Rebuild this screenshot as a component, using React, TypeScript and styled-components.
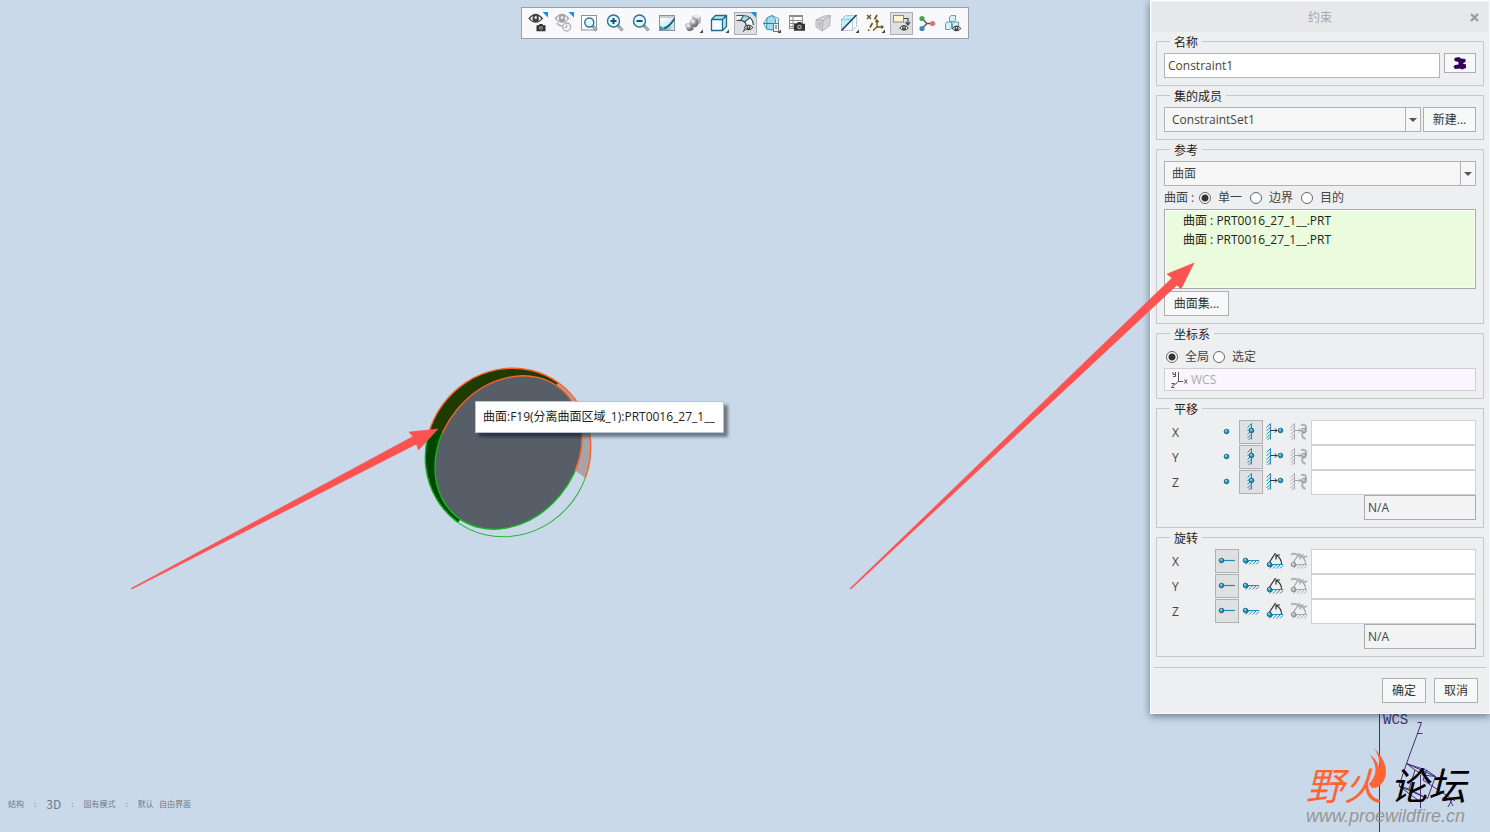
import React from "react";
import styled, { createGlobalStyle } from "styled-components";

const GlobalStyle = createGlobalStyle`
  * { box-sizing: border-box; }
  body {
    margin: 0;
    background: #cad9e9;
    font-family: "Open Sans", "Noto Sans CJK SC", sans-serif;
    font-size: 12px;
    line-height: 16px;
    color: #444;
  }
  button, input, select { font: inherit; color: inherit; margin: 0; }
`;

const Page = styled.div`
  position: relative;
  min-height: 100vh;
  display: flex;
  flex-direction: column;
  justify-content: space-between;
  overflow: hidden;
  padding: 7px 8px 20px;
`;

/* ---------- toolbar ---------- */

const Toolbar = styled.div`
  align-self: center;
  display: flex;
  gap: 3px;
  padding: 4px 3px 3px 4px;
  background: #f9f9fb;
  border: 1px solid #9c9ea4;
`;

const ToolButton = styled.button<{ $active?: boolean }>`
  width: 23px;
  height: 23px;
  padding: 0;
  border: 1px solid ${(p) => (p.$active ? "#aeafb3" : "transparent")};
  background: ${(p) => (p.$active ? "#dedfe2" : "transparent")};
  svg { display: block; overflow: visible; }
`;

const Corner = () => <path d="M16.500 0H22V5.500Z" fill="#0b93f4" />;
const More = () => <path d="M21 17.500V21H17.500Z" fill="#444" />;

const Eye = ({ x, y, s = 1, c = "#444" }: { x: number; y: number; s?: number; c?: string }) => (
  <g transform={`translate(${x} ${y}) scale(${s})`}>
    <path d="M-7.500 0Q0-9.500 7.500 0Q0 8.500 -7.500 0Z" fill={c} />
    <path d="M-5.500 0Q-4-2-2.800-2.500Q-3.800 0-2.600 2.500Q-4 2-5.500 0ZM5.500 0Q4-2 2.800-2.500Q3.800 0 2.600 2.500Q4 2 5.500 0Z" fill="#fff" />
    <circle r="1.200" cx="0" cy="-1" fill="#fff" />
  </g>
);

const Camera = ({ x, y, w }: { x: number; y: number; w: number }) => (
  <g transform={`translate(${x} ${y}) scale(${w / 10})`} fill="#333">
    <path d="M0 1.500H2.500L3.500 0H6.500L7.500 1.500H10V8H0Z" />
    <circle cx="5" cy="4.500" r="2" fill="#bbb" />
    <circle cx="5" cy="4.500" r="1" />
  </g>
);

const Lens = ({ x, y, r }: { x: number; y: number; r: number }) => (
  <>
    <path d={`M${x + r * 0.7} ${y + r * 0.7}L18.500 18.500`} stroke="#8d9094" strokeWidth="3" />
    <path d={`M${x + r * 0.9} ${y + r * 0.9}L18 18`} stroke="#d5d7d9" strokeWidth="1" />
    <circle cx={x} cy={y} r={r} fill="#e4f6fb" stroke="#24759b" strokeWidth="1.400" />
  </>
);

const tools: { label: string; active?: boolean; art: React.ReactNode }[] = [
  { label: "显示快照", art: <><Eye x={9.700} y={6.500} /><Camera x={10.500} y={12} w={9} /><Corner /></> },
  {
    label: "显示历史",
    art: <>
      <Eye x={10} y={6.500} c="#a4a6a8" />
      <path d="M5 11Q7 14 10.500 14" stroke="#b5b7b9" strokeWidth="2" fill="none" />
      <circle cx="14.700" cy="15" r="4" fill="#f4f4f5" stroke="#b0b2b4" strokeWidth="1.300" />
      <path d="M14.700 12.500V15.500H12.500" stroke="#a0a2a4" fill="none" />
      <Corner />
    </>,
  },
  {
    label: "重新调整",
    art: <><rect x="3.500" y="3.500" width="15" height="14.500" fill="#fcfcfc" stroke="#8f9194" /><Lens x={11.300} y={10.500} r={4.500} /></>,
  },
  { label: "放大", art: <><Lens x={9.500} y={9} r={6} /><path d="M6.500 9H12.500M9.500 6V12" stroke="#14526f" strokeWidth="2" /></> },
  { label: "缩小", art: <><Lens x={9.500} y={9} r={6} /><path d="M6.500 9H12.500" stroke="#14526f" strokeWidth="2" /></> },
  {
    label: "重画",
    art: <>
      <defs>
        <linearGradient id="rp" x1="0" y1="0" x2="1" y2="0"><stop offset="0" stopColor="#2f8db0" /><stop offset="1" stopColor="#d4f0f8" /></linearGradient>
        <linearGradient id="rq" x1="0" y1="0" x2="0.700" y2="1"><stop offset="0.200" stopColor="#fff" /><stop offset="1" stopColor="#a5dbea" /></linearGradient>
      </defs>
      <rect x="3.500" y="3.500" width="15" height="15" fill="url(#rq)" stroke="#8f9194" />
      <rect x="4" y="4" width="14" height="2" fill="#c9cccf" />
      <path d="M4 18V14Q6 14 8 17Q14 14 18 7V18Z" fill="url(#rp)" />
      <path d="M7.500 16.500Q14 14.500 18.500 6.500" stroke="#1b5b78" strokeWidth="1.600" />
    </>,
  },
  {
    label: "渲染选项",
    art: <>
      <defs><radialGradient id="ball" cx="0.350" cy="0.300"><stop offset="0" stopColor="#fff" /><stop offset="1" stopColor="#77797b" /></radialGradient></defs>
      <path d="M10 4L15 3L19 5V11L15 13L10 10Z" fill="#b9bbbd" />
      <path d="M10 4L15 3L19 5L15 6.500Z" fill="#ececec" />
      <circle cx="12" cy="11" r="4.500" fill="url(#ball)" />
      <path d="M3 13Q6 9 9 13L12 17Q8 21 5 18Z" fill="url(#ball)" />
      <More />
    </>,
  },
  {
    label: "显示样式",
    art: <>
      <path d="M3.500 7.500L7.500 3.500H18.500V14.500L14.500 18.500H3.500Z" fill="#b7e4f3" />
      <path d="M3.500 7.500H14.500V18.500H3.500Z" fill="#f3fcff" />
      <path d="M3.500 7.500L7.500 3.500H18.500V14.500L14.500 18.500H3.500ZM3.500 7.500H14.500V18.500M14.500 7.500L18.500 3.500" fill="none" stroke="#1d6c8c" strokeWidth="1.300" />
      <More />
    </>,
  },
  {
    label: "曲面显示",
    active: true,
    art: <>
      <path d="M3 3.500H10Q17.500 4 19 12L13 14Q12 8.500 3 8Z" fill="#f4fbfd" />
      <path d="M6.500 8.500L9.500 3.500Q13 3.500 15.500 5.500L10.500 10Q9 8.700 6.500 8.500Z" fill="#a8dceb" />
      <path d="M2.500 3.500H9Q18.500 3.500 19.500 13M2.500 8.500Q12.500 7.500 12 14Q11.500 18 9 19.500M6.500 8.500L9.500 3.500M10.500 10L16 5.500" fill="none" stroke="#33555f" strokeWidth="1.200" />
      <Eye x={14.500} y={15.500} s={0.650} />
      <Corner />
    </>,
  },
  {
    label: "视图方向",
    art: <>
      <path d="M3.500 11.500L7 6L12 3.500L18.500 6.500V13L12 18L6.500 17Z" fill="#d6f1f9" stroke="#5aa9c6" />
      <path d="M7 6L12 3.500L15.500 7.500V16L12 18L6.500 17Z" fill="#a5daec" stroke="#3a92b4" />
      <path d="M3.500 11.500H19" stroke="#2b7b9c" />
      <rect x="13.500" y="11.500" width="5" height="8" fill="#f2f2f2" stroke="#777" />
      <path d="M15 14H17M15 16H17" stroke="#555" />
      <More />
    </>,
  },
  {
    label: "视图管理器",
    art: <>
      <rect x="3.500" y="3.500" width="13" height="13" fill="#fff" stroke="#8a8c8f" />
      <path d="M3 4.500H17M3 8.500H17M3 11.500H17M3 14.500H17M7 4V16" stroke="#8a8c8f" />
      <Camera x={8} y={10} w={11} />
    </>,
  },
  {
    label: "透视图",
    art: <>
      <path d="M4 8L12 4L18.500 3.500L17.500 14L10 19L4 15Z" fill="#d5d6d7" stroke="#b4b5b7" />
      <path d="M4 8L11 8.500L18.500 3.500M11 8.500L10 19" fill="none" stroke="#aaacae" />
      <path d="M6 10L9 10V16L6 14Z" fill="#bcbdbf" />
    </>,
  },
  {
    label: "截面",
    art: <>
      <path d="M3.500 7.500L7.500 3.500H18.500L4 18.500Z" fill="#c6ebf6" />
      <path d="M3.500 7.500L7.500 3.500H18.500V14.500L14.500 18.500H3.500ZM3.500 7.500H14.500V18.500" fill="none" stroke="#62a9c3" strokeDasharray="1 1" />
      <path d="M3.500 18.500L18.500 3" stroke="#1c4256" strokeWidth="1.500" />
      <More />
    </>,
  },
  {
    label: "基准显示过滤器",
    art: <>
      <path d="M3 3L7 7M7 3L3 7" stroke="#6b5317" strokeWidth="1.300" />
      <path d="M13 3L10.500 7.500M8.500 11L6 15.500M5 17.500L4.500 19" stroke="#6b5317" strokeWidth="1.600" />
      <path d="M13 8V15H19M13 15L9 18.500M11.500 10L13 8L14.500 10M17.500 13.500L19 15L17.500 16.500" fill="none" stroke="#6b5317" strokeWidth="1.300" />
      <More />
    </>,
  },
  {
    label: "注释显示",
    active: true,
    art: <>
      <rect x="3.500" y="3.500" width="10" height="6.500" fill="#fff4d2" stroke="#8d8a7f" />
      <path d="M14 6.500H18V12M15.500 10L18 13L20 10" fill="none" stroke="#444" strokeWidth="1.200" />
      <Eye x={14} y={16} s={0.650} />
    </>,
  },
  {
    label: "旋转中心",
    art: <>
      <path d="M6 6.500L11 11.500H16M11 11.500L6 16.500" fill="none" stroke="#555" strokeWidth="1.300" />
      <circle cx="6" cy="6.500" r="2.600" fill="#4d9f58" /><circle cx="6" cy="16.500" r="2.600" fill="#3c8dad" /><circle cx="16.500" cy="11.500" r="2.600" fill="#e07272" />
    </>,
  },
  {
    label: "仿真显示",
    art: <>
      <g fill="#d6f1fa" stroke="#5d9fb9">
        <path d="M7.500 5L9 3.500H13.500V8L12 9.500H7.500Z" />
        <path d="M3.500 11.500L5 10H9.500V16L8 17.500H3.500Z" />
        <path d="M10.500 11.500L12 10H16.500V14L15 15.500H10.500Z" />
      </g>
      <Eye x={14.500} y={16.500} s={0.650} />
    </>,
  },
];

/* ---------- model view ---------- */

const Scene = styled.svg`
  position: absolute;
  left: 0;
  top: 0;
  width: 100%;
  height: 100%;
  pointer-events: none;
`;

const Tooltip = styled.div`
  position: absolute;
  left: 475px;
  top: 401px;
  padding: 7px 8px 7px 7px;
  background: #fff;
  border: 1px solid #a9c7df;
  box-shadow: 4px 4px 3px rgba(0, 0, 0, 0.45);
  color: #222;
  white-space: nowrap;
`;

const StatusLine = styled.div`
  display: flex;
  gap: 10px;
  align-items: center;
  font-size: 8px;
  line-height: 16px;
  color: #6f7987;
  font-family: "Noto Sans CJK SC", sans-serif;
  white-space: pre;
`;

const Mode = styled.span`
  font-size: 12px;
`;

const Brand = styled.div`
  position: absolute;
  right: 16px;
  bottom: 7px;
  width: 168px;
`;

const BrandName = styled.div`
  display: flex;
  gap: 8px;
  font: italic 400 38px/46px "Noto Sans CJK SC", sans-serif;
  color: #000;
`;

const BrandHot = styled.span`
  color: #ff6432;
`;

const BrandUrl = styled.div`
  font: italic 18px/18px "Liberation Sans", sans-serif;
  color: #969696;
`;

/* ---------- dialog ---------- */

const Dialog = styled.form`
  position: absolute;
  top: 0;
  right: 0;
  width: 340px;
  padding: 1px 1px 10px;
  background: #eeeff1;
  border: 1px solid #fafbfc;
  box-shadow: 0 2px 8px rgba(30, 50, 80, 0.6);
`;

const TitleBar = styled.header`
  display: grid;
  grid-template-columns: 28px 1fr 28px;
  align-items: center;
  height: 30px;
  padding-top: 1px;
  background: #e6e8ea;
  color: #a6a7a9;
  text-align: center;
`;

const Title = styled.h1`
  grid-column: 2;
  margin: 0;
  font-size: 12px;
  line-height: 17px;
  font-weight: 400;
`;

const Close = styled.button`
  padding: 0;
  border: 0;
  background: none;
  height: 20px;
  svg { display: block; margin: 0 auto; }
`;

const Groups = styled.div`
  display: flex;
  flex-direction: column;
  gap: 1px;
  padding: 1px 4px 0;
`;

const Group = styled.fieldset`
  min-width: 0;
  margin: 0;
  padding: 3px 7px 7px;
  border: 1px solid #c5c7ca;
`;

const Legend = styled.legend`
  margin-left: 6px;
  padding: 3px 4px 0;
  line-height: 14px;
  color: #222;
`;

const Line = styled.div<{ $gap?: number }>`
  display: flex;
  align-items: flex-start;
  gap: ${(p) => p.$gap ?? 0}px;
`;

const TextBox = styled.input`
  flex: 1;
  min-width: 0;
  height: 25px;
  padding: 0 3px;
  border: 1px solid #b0b2b5;
  border-radius: 0;
  background: #fff;
`;

const Button = styled.button<{ $w: number; $h?: number }>`
  display: flex;
  align-items: center;
  justify-content: center;
  width: ${(p) => p.$w}px;
  height: ${(p) => p.$h ?? 25}px;
  padding: 0;
  border: 1px solid #acaeb1;
  background: #f7f8f8;
  color: #333;
`;

const Combo = styled.div`
  flex: 1;
  display: grid;
  grid-template-columns: 1fr 16px;
  height: 25px;
`;

const Select = styled.select`
  appearance: none;
  grid-area: 1 / 1 / 2 / 3;
  padding: 0 7px;
  border: 1px solid #b0b2b5;
  border-radius: 0;
  background: #f6f6f6;
`;

const Arrow = styled.span`
  grid-area: 1 / 2;
  display: flex;
  align-items: center;
  justify-content: center;
  padding-right: 2px;
  border-left: 1px solid #b0b2b5;
  pointer-events: none;
  &::after {
    content: "";
    border: 4px solid transparent;
    border-top-color: #555;
    border-bottom: 0;
  }
`;

const Radios = styled.div<{ $gap: number; $pad?: number }>`
  display: flex;
  align-items: center;
  gap: ${(p) => p.$gap}px;
  height: 23px;
  padding-left: ${(p) => p.$pad ?? 0}px;
`;

const RadioLabel = styled.label`
  display: flex;
  align-items: center;
  gap: 7px;
`;

const Radio = styled.input`
  appearance: none;
  width: 12px;
  height: 12px;
  border: 1px solid #666;
  border-radius: 50%;
  background: #fff;
  &:checked { background: radial-gradient(circle, #333 0 3px, #fff 4px); }
`;

const Caption = styled.span`
  width: 27px;
  white-space: pre;
`;

const Picks = styled.ul`
  height: 80px;
  margin: 0 0 2px;
  padding: 1px 18px;
  list-style: none;
  border: 1px solid #a9abb0;
  background: #ebfcde;
  box-shadow: inset 0 0 0 1px #f6fdf0;
  line-height: 19px;
  color: #222;
`;

const SystemField = styled.div`
  display: flex;
  align-items: center;
  gap: 3px;
  height: 23px;
  padding-left: 6px;
  border: 1px solid #cdcfd3;
  background: #f9f6fe;
  color: #a9a9ad;
`;

const AxisRow = styled.div`
  display: grid;
  grid-template-columns: 51px repeat(4, 24px) 1fr;
  height: 25px;
`;

const AxisName = styled.label`
  padding-left: 8px;
  line-height: 25px;
`;

const AxisButton = styled.button<{ $active?: boolean }>`
  width: 24px;
  height: 24px;
  padding: 0;
  border: 1px solid ${(p) => (p.$active ? "#aeb0b3" : "transparent")};
  background: ${(p) => (p.$active ? "#dfe0e2" : "transparent")};
  svg { display: block; }
`;

const AxisValue = styled(TextBox)`
  border-color: #cfd1d5;
`;

const Result = styled.output`
  display: block;
  width: 112px;
  height: 25px;
  margin-left: auto;
  padding: 0 3px;
  line-height: 23px;
  border: 1px solid #acaeb1;
  background: #f3f3f3;
`;

const Footer = styled.footer`
  display: flex;
  justify-content: flex-end;
  gap: 8px;
  margin: 10px 2px 0;
  padding: 10px 8px 0;
  border-top: 1px solid #c5c7ca;
`;

const Dot = ({ x, y, grey }: { x: number; y: number; grey?: boolean }) => (
  <>
    <circle cx={x} cy={y} r="2.300" fill={grey ? "#b4b5b6" : "#2a93bd"} stroke={grey ? "#8d8e90" : "#1a6a8b"} />
    <circle cx={x - 0.500} cy={y - 0.700} r="1" fill={grey ? "#ddd" : "#9bd7ec"} />
  </>
);

const Wall = ({ x, grey }: { x: number; grey?: boolean }) => (
  <path
    d={`M${x} 3.500V19.500M${x} 3.500L${x - 4} 7.500M${x} 7L${x - 4} 11M${x} 10.500L${x - 4} 14.500M${x} 14L${x - 4} 18M${x} 17L${x - 3} 20`}
    fill="none" stroke={grey ? "#a9abad" : "#1f8cba"}
  />
);

const Floor = ({ y, grey }: { y: number; grey?: boolean }) => (
  <path
    d={`M7 ${y}H20M10.500 ${y}L6.500 ${y + 4}M14 ${y}L10 ${y + 4}M17.500 ${y}L13.500 ${y + 4}M20 ${y + 1}L17 ${y + 4}`}
    fill="none" stroke={grey ? "#a9abad" : "#1f8cba"}
  />
);

const Push = ({ c }: { c: string }) => (
  <path d="M7.500 10.500H14M12 8.500L14 10.500L12 12.500" fill="none" stroke={c} />
);

const Swing = ({ c }: { c: string }) => (
  <path d="M6 14L12.500 4M18.500 15Q18.500 9.500 13.500 6.500M13 10.500V6H17" fill="none" stroke={c} strokeWidth="1.200" />
);

const moveModes = [
  { label: "自由", art: <Dot x={11.500} y={11.500} /> },
  { label: "固定", art: <><Wall x={12.500} /><Dot x={12.500} y={10.500} /></> },
  { label: "指定", art: <><Wall x={7.500} /><Push c="#333" /><Dot x={17.500} y={10.500} /></> },
  {
    label: "函数",
    art: <>
      <Wall x={7.500} grey /><Push c="#a0a2a4" />
      <path d="M14 5Q20 4 19 9Q18 12 15.500 13Q14 17 18.500 19" fill="none" stroke="#b0b2b4" strokeWidth="2" />
      <Dot x={17} y={10.500} grey />
    </>,
  },
];

const turnModes = [
  { label: "自由", art: <><path d="M7 11.500H20" stroke="#1f8cba" strokeWidth="1.200" /><Dot x={6.500} y={11.500} /></> },
  { label: "固定", art: <><Floor y={11.500} /><Dot x={6.500} y={11.500} /></> },
  { label: "指定", art: <><Floor y={15.500} /><Swing c="#333" /><Dot x={6.500} y={15.500} /></> },
  {
    label: "函数",
    art: <>
      <Floor y={15.500} grey /><Swing c="#a0a2a4" />
      <path d="M4 5.500Q8 3.500 12 7Q16 9.500 20 7" fill="none" stroke="#b0b2b4" strokeWidth="2" />
      <Dot x={6.500} y={15.500} grey />
    </>,
  },
];

function AxisGroup({ name, modes, active }: { name: string; modes: typeof moveModes; active: number }) {
  return (
    <Group>
      <Legend>{name}</Legend>
      {["X", "Y", "Z"].map((axis) => (
        <AxisRow key={axis}>
          <AxisName htmlFor={name + axis}>{axis}</AxisName>
          {modes.map((m, i) => (
            <AxisButton key={i} type="button" aria-label={`${name} ${axis} ${m.label}`} $active={i === active}>
              <svg width="22" height="22" viewBox="1 1 22 22">{m.art}</svg>
            </AxisButton>
          ))}
          <AxisValue id={name + axis} />
        </AxisRow>
      ))}
      <Result>N/A</Result>
    </Group>
  );
}

const Rim = (props: React.SVGProps<SVGEllipseElement>) => (
  <ellipse cx="508" cy="452.500" rx="86" ry="81" transform="rotate(-54 508 452.500)" {...props} />
);

const Face = (props: React.SVGProps<SVGEllipseElement>) => (
  <ellipse cx="508.500" cy="452.500" rx="82.500" ry="67" transform="rotate(-51 508.500 452.500)" {...props} />
);

export default function App() {
  return (
    <Page>
      <GlobalStyle />
      <Toolbar role="toolbar">
        {tools.map((t) => (
          <ToolButton key={t.label} aria-label={t.label} $active={t.active}>
            <svg width="21" height="21" viewBox="1 1 21 21" fill="none">{t.art}</svg>
          </ToolButton>
        ))}
      </Toolbar>

      <Scene viewBox="0 0 1490 832" preserveAspectRatio="xMinYMin meet">
        <defs>
          <clipPath id="upper"><path d="M400 340H620V490L585 478L576 471L441 433L400 418Z" /></clipPath>
          <clipPath id="lower"><path d="M400 418L441 433L576 471L585 478L620 490V560H400Z" /></clipPath>
          <clipPath id="leftSide"><path d="M400 340H589L439 549H400Z" /></clipPath>
          <clipPath id="rightSide"><path d="M589 340L439 549H640V340Z" /></clipPath>
        </defs>
        <g clipPath="url(#leftSide)">
          <Rim fill="#004600" />
          <g clipPath="url(#upper)"><Rim fill="#1f3b00" /></g>
          <g clipPath="url(#lower)"><Rim fill="none" stroke="#12b81c" strokeWidth="1.400" /></g>
        </g>
        <g clipPath="url(#rightSide)">
          <g clipPath="url(#upper)"><Rim fill="#aaa3a6" /></g>
          <g clipPath="url(#lower)"><Rim fill="none" stroke="#20b830" /></g>
        </g>
        <g clipPath="url(#upper)"><Rim fill="none" stroke="#ff6226" strokeWidth="1.400" /></g>
        <Face fill="#585e68" />
        <g clipPath="url(#upper)"><Face fill="none" stroke="#ff6226" strokeWidth="1.400" /></g>
        <g clipPath="url(#lower)"><Face fill="none" stroke="#12b81c" strokeWidth="1.400" /></g>
        <path d="M131 588.500L413 436.500L409 432L438 429L418.500 450L416.500 444L132 589Z" fill="#fb5252" stroke="#fb5252" strokeWidth="0.600" />
        <g fill="none" stroke="#43306f">
          <path d="M1379.500 712V832" />
          <path d="M1417.500 722.500H1421.500L1406.500 763.500L1399 786M1417.500 733.500H1422.500" />
          <path d="M1406.500 763.500L1435.500 776.500L1427.500 798.500L1399 786L1420.500 802M1406.500 763.500L1427 770.500L1435.500 776.500M1415 770L1423 775L1435.500 776.500M1427 770L1423 780M1415 770L1409 789M1423 780L1455 801M1420.500 775V808M1399 786L1409 789L1427.500 798.500M1406.500 763.500L1415 770" />
          <path d="M1448 807L1453 798M1449 798L1453 806" />
        </g>
        <text x="1383" y="724" fill="#43306f" fontFamily="Liberation Mono, monospace" fontSize="14">WCS</text>
      </Scene>

      <Tooltip role="tooltip">曲面:F19(分离曲面区域_1):PRT0016_27_1__</Tooltip>

      <StatusLine>
        <span>结构</span><span>:</span><Mode>3D</Mode><span>:</span><span>固有模式</span><span>:</span><span>{"默认   自由界面"}</span>
      </StatusLine>

      <Brand>
        <BrandName><BrandHot>野火</BrandHot><span>论坛</span></BrandName>
        <BrandUrl>www.proewildfire.cn</BrandUrl>
      </Brand>

      <Dialog onSubmit={(e) => e.preventDefault()}>
        <TitleBar>
          <Title>约束</Title>
          <Close type="button" aria-label="关闭">
            <svg width="9" height="9" viewBox="0 0 9 9"><path d="M1 1L8 8M8 1L1 8" stroke="#9b9c9e" strokeWidth="2.400" /></svg>
          </Close>
        </TitleBar>
        <Groups>
          <Group>
            <Legend>名称</Legend>
            <Line $gap={4}>
              <TextBox aria-label="名称" defaultValue="Constraint1" />
              <Button type="button" $w={32} $h={20} aria-label="颜色">
                <svg width="14" height="13" viewBox="0 0 14 13"><path d="M1.500 1L6 0L8 1.500L12.500 2L12.500 5L9.500 6.500L13 7.500V11L9 12.500L7 11.500L2 12L0.500 9.500L2 8L5.500 7.500L5.500 5L1.500 4Z" fill="#340060" /></svg>
              </Button>
            </Line>
          </Group>
          <Group>
            <Legend>集的成员</Legend>
            <Line $gap={2}>
              <Combo>
                <Select aria-label="集的成员"><option>ConstraintSet1</option></Select>
                <Arrow />
              </Combo>
              <Button type="button" $w={53}>新建...</Button>
            </Line>
          </Group>
          <Group>
            <Legend>参考</Legend>
            <Combo>
              <Select aria-label="参考"><option>曲面</option></Select>
              <Arrow />
            </Combo>
            <Radios $gap={8}>
              <Caption>曲面 :</Caption>
              <RadioLabel><Radio type="radio" name="surface" defaultChecked />单一</RadioLabel>
              <RadioLabel><Radio type="radio" name="surface" />边界</RadioLabel>
              <RadioLabel><Radio type="radio" name="surface" />目的</RadioLabel>
            </Radios>
            <Picks>
              <li>曲面 : PRT0016_27_1__.PRT</li>
              <li>曲面 : PRT0016_27_1__.PRT</li>
            </Picks>
            <Button type="button" $w={65}>曲面集...</Button>
          </Group>
          <Group>
            <Legend>坐标系</Legend>
            <Radios $gap={4} $pad={2}>
              <RadioLabel><Radio type="radio" name="system" defaultChecked />全局</RadioLabel>
              <RadioLabel><Radio type="radio" name="system" />选定</RadioLabel>
            </Radios>
            <SystemField>
              <svg width="17" height="18" viewBox="0 0 17 18" fill="none" stroke="#555">
                <path d="M7.500 1V10.500H12M7.500 10.500L3.500 14M2 1V3.500H4.500M4.500 1V5.500H2M13.500 8.500L16 12.500M16 8.500L13.500 12.500M0.500 12.500H3.500L0.500 16.500H3.500" />
              </svg>
              WCS
            </SystemField>
          </Group>
          <AxisGroup name="平移" modes={moveModes} active={1} />
          <AxisGroup name="旋转" modes={turnModes} active={0} />
        </Groups>
        <Footer>
          <Button $w={44}>确定</Button>
          <Button type="button" $w={44}>取消</Button>
        </Footer>
      </Dialog>

      <Scene viewBox="0 0 1490 832" preserveAspectRatio="xMinYMin meet">
        <path d="M850 588.500L1172 278L1167 274L1194 263L1181 289L1177 285L851 589Z" fill="#fb5252" stroke="#fb5252" strokeWidth="0.600" />
        <path d="M1374 748C1384 758 1388 768 1385 778C1382 785 1378 788 1372 788L1369 784C1377 775 1378 767 1370 755C1376 759 1379 765 1379 769C1380 763 1379 755 1374 748Z" fill="#ff6432" />
      </Scene>
    </Page>
  );
}
